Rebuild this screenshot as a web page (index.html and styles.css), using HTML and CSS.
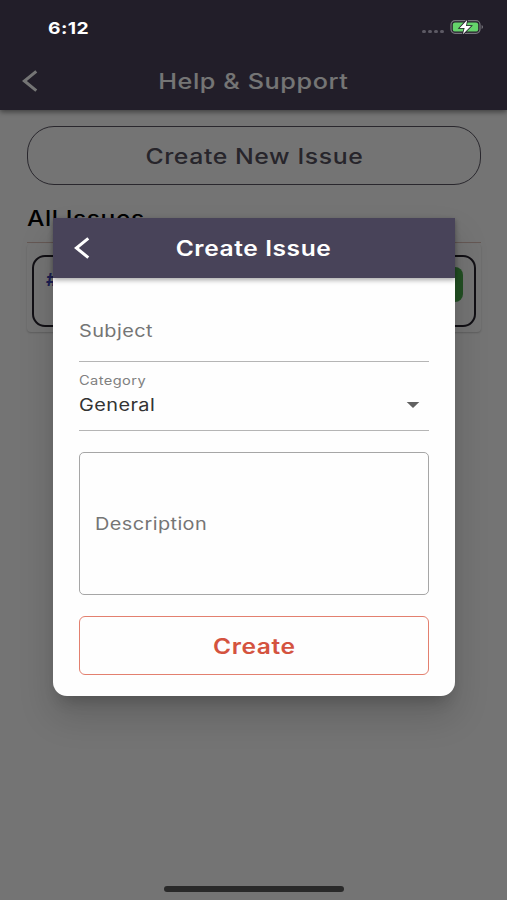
FILE: index.html
```html
<!DOCTYPE html>
<html lang="en">
<head>
  <meta charset="UTF-8">
  <meta name="viewport" content="width=device-width, initial-scale=1.0">
  <title>Help &amp; Support</title>
  <link rel="stylesheet" href="styles.css">
</head>
<body>
  <div class="screen">
    <header class="app-bar">
      <svg class="back" width="16" height="22" viewBox="0 0 16 22"><path d="M14.3 1.4 2.4 11l11.9 9.6"/></svg>
      <h1><span class="text">Help &amp; Support</span></h1>
    </header>

    <main class="content">
      <button class="new-issue"><span class="text">Create New Issue</span></button>
      <h2><span class="text">All Issues</span></h2>
      <div class="issue-card">
        <div class="issue">
          <span class="issue-id">#1</span>
          <span class="issue-status"></span>
        </div>
      </div>
    </main>
    <div class="home-bar"></div>

    <div class="overlay">
      <div class="modal">
        <div class="modal-header">
          <svg class="back" width="16" height="22" viewBox="0 0 16 22"><path d="M14.3 1.4 2.4 11l11.9 9.6"/></svg>
          <h3><span class="text">Create Issue</span></h3>
        </div>
        <div class="form">
          <div class="field subject"><span class="text">Subject</span></div>
          <div class="field category">
            <label><span class="text">Category</span></label>
            <div class="select">
              <span class="text">General</span>
              <svg width="14" height="6" viewBox="0 0 14 6"><path d="M.7 0h12.6L7 6z" fill="#616161"/></svg>
            </div>
          </div>
          <div class="description"><span class="text">Description</span></div>
          <button class="create"><span class="text">Create</span></button>
        </div>
      </div>
    </div>

    <div class="status-bar">
      <span class="time text">6:12</span>
      <div class="dots"><i></i><i></i><i></i><i></i></div>
      <svg class="battery" width="34" height="16" viewBox="0 0 34 16">
        <rect x="1" y="1.7" width="29" height="12.6" rx="4" fill="none" stroke="#77757c" stroke-width="1.2"/>
        <path d="M31.6 6v4q1.4-.6 1.4-2t-1.4-2z" fill="#77757c"/>
        <rect x="2.8" y="3.4" width="25.4" height="9.2" rx="2.2" fill="#65d36b"/>
        <path d="M17.2.9 9.6 9h5l-1.7 6.2L21 7h-5z" fill="#fff" stroke="#221f29" stroke-width="1.6" paint-order="stroke"/>
      </svg>
    </div>
  </div>
</body>
</html>
```
FILE: styles.css
```css
* {
  box-sizing: border-box;
}
body {
  margin: 0;
  font-family: Inter, "Liberation Sans", sans-serif;
  color: #000;
}
h1, h2, h3 {
  margin: 0;
  font-weight: 500;
}
button {
  font-family: inherit;
  background: none;
  padding: 0;
}
.screen {
  position: relative;
  width: 507px;
  height: 900px;
  background: #fcfcfc;
  overflow: hidden;
}
.text {
  display: inline-block;
  white-space: nowrap;
  letter-spacing: 0.35px;
  transform: scaleX(1.17);
  transform-origin: left;
}
h1 .text, h3 .text, button .text {
  letter-spacing: 0.5px;
  transform-origin: center;
}
.back path {
  fill: none;
  stroke: #fff;
  stroke-width: 3;
}

/* page */
.app-bar {
  display: grid;
  grid-template-columns: 40px 1fr 40px;
  align-items: center;
  height: 110px;
  padding: 52px 22px 0;
  background: #4a4359;
  color: #fff;
  text-align: center;
  box-shadow: 0 2px 5px rgba(0,0,0,0.45);
}
.app-bar h1 {
  font-size: 21px;
  font-weight: 500;
}
.app-bar h1 .text {
  transform: scaleX(1.2);
}
.content {
  padding: 16px 26px 0 27px;
}
.new-issue {
  display: block;
  width: 100%;
  height: 59px;
  padding-top: 2px;
  border: 1.5px solid #5a5663;
  border-radius: 27px;
  font-size: 21px;
  font-weight: 500;
  color: #56525f;
}
.new-issue .text {
  transform: scaleX(1.18);
}
.content h2 {
  height: 58px;
  padding-top: 21px;
  font-size: 21px;
  line-height: 26px;
  border-bottom: 1px solid #dcc0b8;
}
.content h2 .text {
  letter-spacing: 0.5px;
}
.issue-card {
  height: 88px;
  margin-top: 1px;
  padding: 11px 5px 4px;
  border-radius: 4px;
  box-shadow: 0 1px 2px rgba(0,0,0,0.2);
}
.issue {
  display: flex;
  justify-content: space-between;
  height: 72px;
  padding: 10px 11px 0 12px;
  border: 2px solid #25222d;
  border-radius: 13px;
}
.issue-id {
  padding-top: 2px;
  font-size: 18px;
  font-weight: 700;
  color: #3f45b5;
}
.issue-status {
  width: 70px;
  height: 35px;
  border-radius: 8px;
  background: #4caf50;
}
.home-bar {
  position: absolute;
  left: 164px;
  bottom: 8px;
  width: 180px;
  height: 6px;
  border-radius: 3px;
  background: #5b5b5b;
}

/* dialog */
.overlay {
  position: absolute;
  inset: 0;
  display: flex;
  justify-content: center;
  align-items: flex-start;
  padding: 218px 0 0 1px;
  background: rgba(0,0,0,0.54);
}
.modal {
  width: 402px;
  height: 478px;
  border-radius: 0 0 14px 14px;
  background: #fefefe;
  box-shadow: 0 11px 15px -7px rgba(0,0,0,0.2), 0 20px 34px 2px rgba(0,0,0,0.14);
}
.modal-header {
  display: grid;
  grid-template-columns: 40px 1fr 40px;
  align-items: center;
  height: 60px;
  padding: 0 21px;
  background: #484359;
  color: #fff;
  text-align: center;
  box-shadow: 0 2px 5px rgba(0,0,0,0.35);
}
.modal-header h3 {
  font-size: 21px;
  font-weight: 600;
}
.form {
  padding: 24px 26px 0;
}
.field {
  border-bottom: 1px solid #b5b5b5;
}
.subject {
  height: 60px;
  padding-top: 18px;
  font-size: 17px;
  line-height: 22px;
  color: #757575;
}
.category {
  height: 69px;
  padding-top: 11px;
}
.category label {
  display: block;
  font-size: 12.5px;
  line-height: 16px;
  color: #808080;
}
.select {
  display: flex;
  justify-content: space-between;
  align-items: center;
  height: 32px;
  padding-right: 9px;
  font-size: 17px;
  color: #333;
}
.description {
  display: flex;
  align-items: center;
  height: 143px;
  margin-top: 21px;
  padding-left: 15px;
  border: 1px solid #a6a6a6;
  border-radius: 5px;
  font-size: 17px;
  color: #757575;
}
.create {
  display: block;
  width: 100%;
  height: 59px;
  margin-top: 21px;
  padding-top: 2px;
  border: 1.5px solid #e3806f;
  border-radius: 6px;
  font-size: 21px;
  font-weight: 600;
  color: #d4533f;
}

/* status bar */
.status-bar {
  position: absolute;
  top: 0;
  left: 0;
  display: flex;
  align-items: center;
  width: 507px;
  height: 54px;
  padding: 0 23px 0 48px;
  color: #fff;
}
.time {
  padding-top: 1px;
  font-size: 16.5px;
  font-weight: 700;
}
.dots {
  display: flex;
  gap: 2px;
  margin: 9px 6px 0 auto;
}
.dots i {
  width: 4px;
  height: 3px;
  border-radius: 2px;
  background: #5d5a64;
}
```
